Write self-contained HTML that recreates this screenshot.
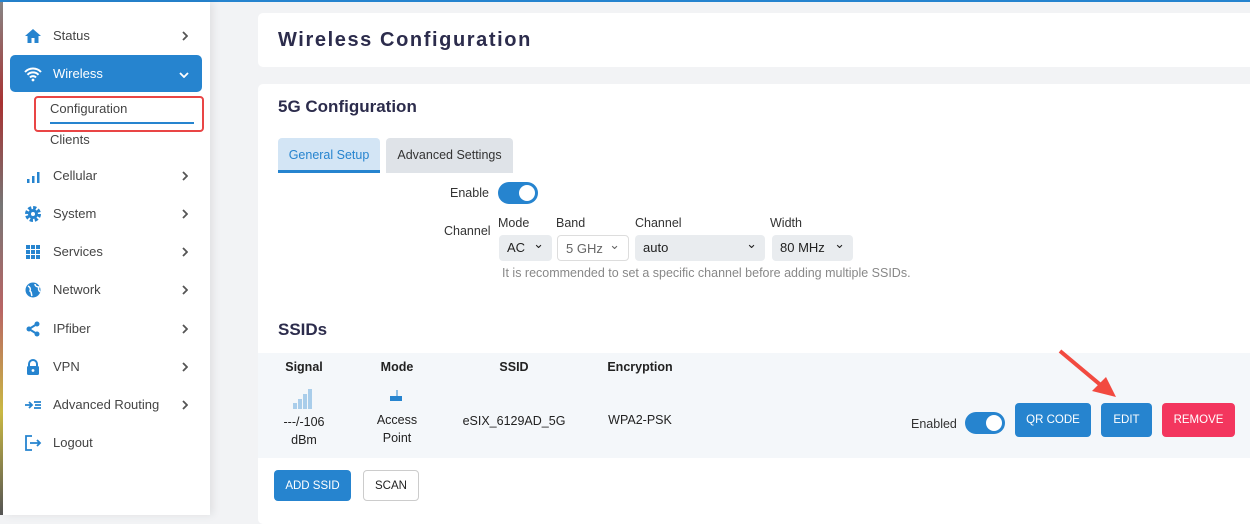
<!DOCTYPE html>
<html><head><style>
*{box-sizing:border-box;margin:0;padding:0}
body{width:1250px;height:515px;overflow:hidden;background:#f2f3f5;font-family:"Liberation Sans","DejaVu Sans",sans-serif;position:relative;color:#333}
.topline{position:absolute;left:0;top:0;width:1250px;height:2px;background:#2684cf}
.strip{position:absolute;left:0;top:0;width:3px;height:515px;background:linear-gradient(#888,#a33 20%,#777 40%,#b66 60%,#cb4 80%,#555)}
.side{position:absolute;left:3px;top:2px;width:207px;height:513px;background:#fff;box-shadow:3px 0 8px rgba(0,0,0,.08)}
.item{position:absolute;left:7px;width:192px;height:37px;font-size:13px;color:#444}
.item .ic{position:absolute;left:14px;top:10px;width:18px;height:18px}
.item .t{position:absolute;left:43px;top:11px}
.item .ch{position:absolute;right:14px;top:14px;width:6px;height:10px}
.item.act{background:#2684cf;border-radius:5px;color:#fff}
.sub{position:absolute;left:50px;font-size:13px;color:#444}
.card{position:absolute;left:258px;width:992px;background:#fff;border-radius:5px 0 0 5px}
h1{position:absolute;left:20px;top:16px;font-size:20px;letter-spacing:1.6px;color:#2c2c4c;font-weight:bold}
h2{font-size:17px;color:#2c2c4c;font-weight:bold;position:absolute}
.lbl{position:absolute;font-size:12.5px;color:#333}
.sel{position:absolute;height:26px;border-radius:4px;background:#e9ecef;font-size:13px;color:#222;padding:5px 0 0 8px}
.sel:after{content:"⌄";position:absolute;right:8px;top:1px;font-size:13px}
.tog{position:absolute;width:40px;height:22px;border-radius:11px;background:#2684cf}
.tog:after{content:"";position:absolute;right:3px;top:3px;width:16px;height:16px;border-radius:50%;background:#fff}
.btn{position:absolute;height:34px;border-radius:4px;color:#fff;font-size:11.5px;text-align:center;line-height:35px;background:#2684cf}
.th{position:absolute;font-size:12.5px;font-weight:bold;color:#222;text-align:center}
.td{position:absolute;font-size:12.5px;color:#222;text-align:center;line-height:18px}
</style></head><body>
<div class="strip"></div>
<div class="topline"></div>
<div class="side">
 <div class="item" style="top:15px"><svg class="ic" viewBox="0 0 18 18"><path d="M9 2L1 9h2.5v7h4v-5h3v5h4V9H17z" fill="#2684cf"/></svg><span class="t">Status</span><svg class="ch" viewBox="0 0 6 10"><path d="M1 1l4 4-4 4" stroke="#555" stroke-width="1.8" fill="none"/></svg></div>
 <div class="item act" style="top:53px"><svg class="ic" viewBox="0 0 18 18"><path d="M1 7a11 11 0 0 1 16 0M3.5 9.8a7.5 7.5 0 0 1 11 0M6 12.5a4 4 0 0 1 6 0" stroke="#fff" stroke-width="2" fill="none"/><circle cx="9" cy="15" r="1.4" fill="#fff"/></svg><span class="t">Wireless</span><svg class="ch" style="width:10px;height:6px;top:17px;right:13px" viewBox="0 0 10 6"><path d="M1 1l4 4 4-4" stroke="#fff" stroke-width="1.8" fill="none"/></svg></div>
 <div class="sub" style="top:99px;left:47px">Configuration</div>
 <div style="position:absolute;left:47px;top:120px;width:144px;height:2px;background:#2684cf"></div>
 <div style="position:absolute;left:31px;top:94px;width:170px;height:36px;border:2.5px solid #e94545;border-radius:4px"></div>
 <div class="sub" style="top:130px;left:47px">Clients</div>
 <div class="item" style="top:155px"><svg class="ic" viewBox="0 0 18 18"><rect x="3" y="12" width="2.5" height="4" fill="#2684cf"/><rect x="8" y="9" width="2.5" height="7" fill="#2684cf"/><rect x="13" y="5" width="2.5" height="11" fill="#2684cf"/></svg><span class="t">Cellular</span><svg class="ch" viewBox="0 0 6 10"><path d="M1 1l4 4-4 4" stroke="#555" stroke-width="1.8" fill="none"/></svg></div>
 <div class="item" style="top:193px"><svg class="ic" viewBox="0 0 18 18"><circle cx="9" cy="9" r="6" fill="none" stroke="#2684cf" stroke-width="4" stroke-dasharray="3 1.7"/><circle cx="9" cy="9" r="5" fill="#2684cf"/><circle cx="9" cy="9" r="2" fill="#fff"/></svg><span class="t">System</span><svg class="ch" viewBox="0 0 6 10"><path d="M1 1l4 4-4 4" stroke="#555" stroke-width="1.8" fill="none"/></svg></div>
 <div class="item" style="top:231px"><svg class="ic" viewBox="0 0 18 18" fill="#2684cf"><rect x="2" y="2" width="4" height="4"/><rect x="7" y="2" width="4" height="4"/><rect x="12" y="2" width="4" height="4"/><rect x="2" y="7" width="4" height="4"/><rect x="7" y="7" width="4" height="4"/><rect x="12" y="7" width="4" height="4"/><rect x="2" y="12" width="4" height="4"/><rect x="7" y="12" width="4" height="4"/><rect x="12" y="12" width="4" height="4"/></svg><span class="t">Services</span><svg class="ch" viewBox="0 0 6 10"><path d="M1 1l4 4-4 4" stroke="#555" stroke-width="1.8" fill="none"/></svg></div>
 <div class="item" style="top:269px"><svg class="ic" viewBox="0 0 18 18"><circle cx="9" cy="9" r="7.5" fill="#2684cf"/><path d="M4 5c2 1 3 3 2 5 2 1 1 3 2 5M11 3c0 2 2 3 4 3-1 2 0 4 1 5" stroke="#fff" stroke-width="1.5" fill="none"/></svg><span class="t">Network</span><svg class="ch" viewBox="0 0 6 10"><path d="M1 1l4 4-4 4" stroke="#555" stroke-width="1.8" fill="none"/></svg></div>
 <div class="item" style="top:308px"><svg class="ic" viewBox="0 0 18 18"><path d="M13 4L5 9l8 5" stroke="#2684cf" stroke-width="2" fill="none"/><circle cx="13" cy="4" r="2.5" fill="#2684cf"/><circle cx="5" cy="9" r="2.5" fill="#2684cf"/><circle cx="13" cy="14" r="2.5" fill="#2684cf"/></svg><span class="t">IPfiber</span><svg class="ch" viewBox="0 0 6 10"><path d="M1 1l4 4-4 4" stroke="#555" stroke-width="1.8" fill="none"/></svg></div>
 <div class="item" style="top:346px"><svg class="ic" viewBox="0 0 18 18"><path d="M5 8V6a4 4 0 0 1 8 0v2" stroke="#2684cf" stroke-width="2" fill="none"/><rect x="3" y="8" width="12" height="9" rx="1.5" fill="#2684cf"/><circle cx="9" cy="12.5" r="1.4" fill="#fff"/></svg><span class="t">VPN</span><svg class="ch" viewBox="0 0 6 10"><path d="M1 1l4 4-4 4" stroke="#555" stroke-width="1.8" fill="none"/></svg></div>
 <div class="item" style="top:384px"><svg class="ic" viewBox="0 0 18 18"><path d="M1 9h7M5 6l3 3-3 3M10 6h7M11 9h6M10 12h7" stroke="#2684cf" stroke-width="1.8" fill="none"/></svg><span class="t">Advanced Routing</span><svg class="ch" viewBox="0 0 6 10"><path d="M1 1l4 4-4 4" stroke="#555" stroke-width="1.8" fill="none"/></svg></div>
 <div class="item" style="top:422px"><svg class="ic" viewBox="0 0 18 18"><path d="M8 2H2v14h6M6 9h10M13 6l3 3-3 3" stroke="#2684cf" stroke-width="1.8" fill="none"/></svg><span class="t">Logout</span></div>
</div>
<div class="card" style="top:13px;height:54px"><h1>Wireless Configuration</h1></div>
<div class="card" style="top:84px;height:440px">
 <h2 style="left:20px;top:13px">5G Configuration</h2>
 <div style="position:absolute;left:20px;top:54px;width:102px;height:35px;background:#d3e5f5;border-radius:4px 4px 0 0;border-bottom:3px solid #2684cf;color:#2684cf;font-size:12.5px;text-align:center;line-height:34px">General Setup</div>
 <div style="position:absolute;left:128px;top:54px;width:127px;height:35px;background:#dfe3e8;border-radius:4px 4px 0 0;color:#333;font-size:12.5px;text-align:center;line-height:34px">Advanced Settings</div>
 <div class="lbl" style="left:192px;top:102px">Enable</div>
 <div class="tog" style="left:240px;top:98px"></div>
 <div class="lbl" style="left:186px;top:140px">Channel</div>
 <div class="lbl" style="left:240px;top:132px">Mode</div>
 <div class="lbl" style="left:298px;top:132px">Band</div>
 <div class="lbl" style="left:377px;top:132px">Channel</div>
 <div class="lbl" style="left:512px;top:132px">Width</div>
 <div class="sel" style="left:241px;top:151px;width:53px">AC</div>
 <div class="sel" style="left:299px;top:151px;width:72px;background:#fff;border:1px solid #ddd;color:#666">5 GHz</div>
 <div class="sel" style="left:377px;top:151px;width:130px">auto</div>
 <div class="sel" style="left:514px;top:151px;width:81px">80 MHz</div>
 <div class="lbl" style="left:244px;top:182px;color:#888">It is recommended to set a specific channel before adding multiple SSIDs.</div>
 <h2 style="left:20px;top:236px">SSIDs</h2>
 <div style="position:absolute;left:0;top:269px;width:992px;height:105px;background:#f4f7fa"></div>
 <div class="th" style="left:16px;top:276px;width:60px">Signal</div>
 <div class="th" style="left:109px;top:276px;width:60px">Mode</div>
 <div class="th" style="left:226px;top:276px;width:60px">SSID</div>
 <div class="th" style="left:342px;top:276px;width:80px">Encryption</div>
 <svg style="position:absolute;left:35px;top:305px" width="20" height="20"><g fill="#a9cdea"><rect x="0" y="14" width="4" height="6"/><rect x="5" y="10" width="4" height="10"/><rect x="10" y="5" width="4" height="15"/><rect x="15" y="0" width="4" height="20"/></g></svg>
 <div class="td" style="left:16px;top:329px;width:60px">---/-106<br>dBm</div>
 <svg style="position:absolute;left:131px;top:305px" width="14" height="14"><path d="M8 1v6" stroke="#2684cf"/><rect x="1" y="7" width="12" height="5" fill="#2684cf"/></svg>
 <div class="td" style="left:109px;top:327px;width:60px">Access<br>Point</div>
 <div class="td" style="left:196px;top:328px;width:120px">eSIX_6129AD_5G</div>
 <div class="td" style="left:342px;top:327px;width:80px">WPA2-PSK</div>
 <div class="lbl" style="left:653px;top:333px">Enabled</div>
 <div class="tog" style="left:707px;top:328px"></div>
 <div class="btn" style="left:757px;top:319px;width:76px">QR CODE</div>
 <div class="btn" style="left:843px;top:319px;width:51px">EDIT</div>
 <div class="btn" style="left:904px;top:319px;width:73px;background:#f3365e">REMOVE</div>
 <svg style="position:absolute;left:800px;top:265px" width="60" height="50"><path d="M2 2L45 38" stroke="#f24a40" stroke-width="4"/><path d="M58 48L34 42 48 28z" fill="#f24a40"/></svg>
 <div class="btn" style="left:16px;top:386px;width:77px;height:31px;line-height:33px">ADD SSID</div>
 <div class="btn" style="left:105px;top:386px;width:56px;height:31px;line-height:31px;background:#fff;color:#222;border:1px solid #ccc">SCAN</div>
</div>
</body></html>
